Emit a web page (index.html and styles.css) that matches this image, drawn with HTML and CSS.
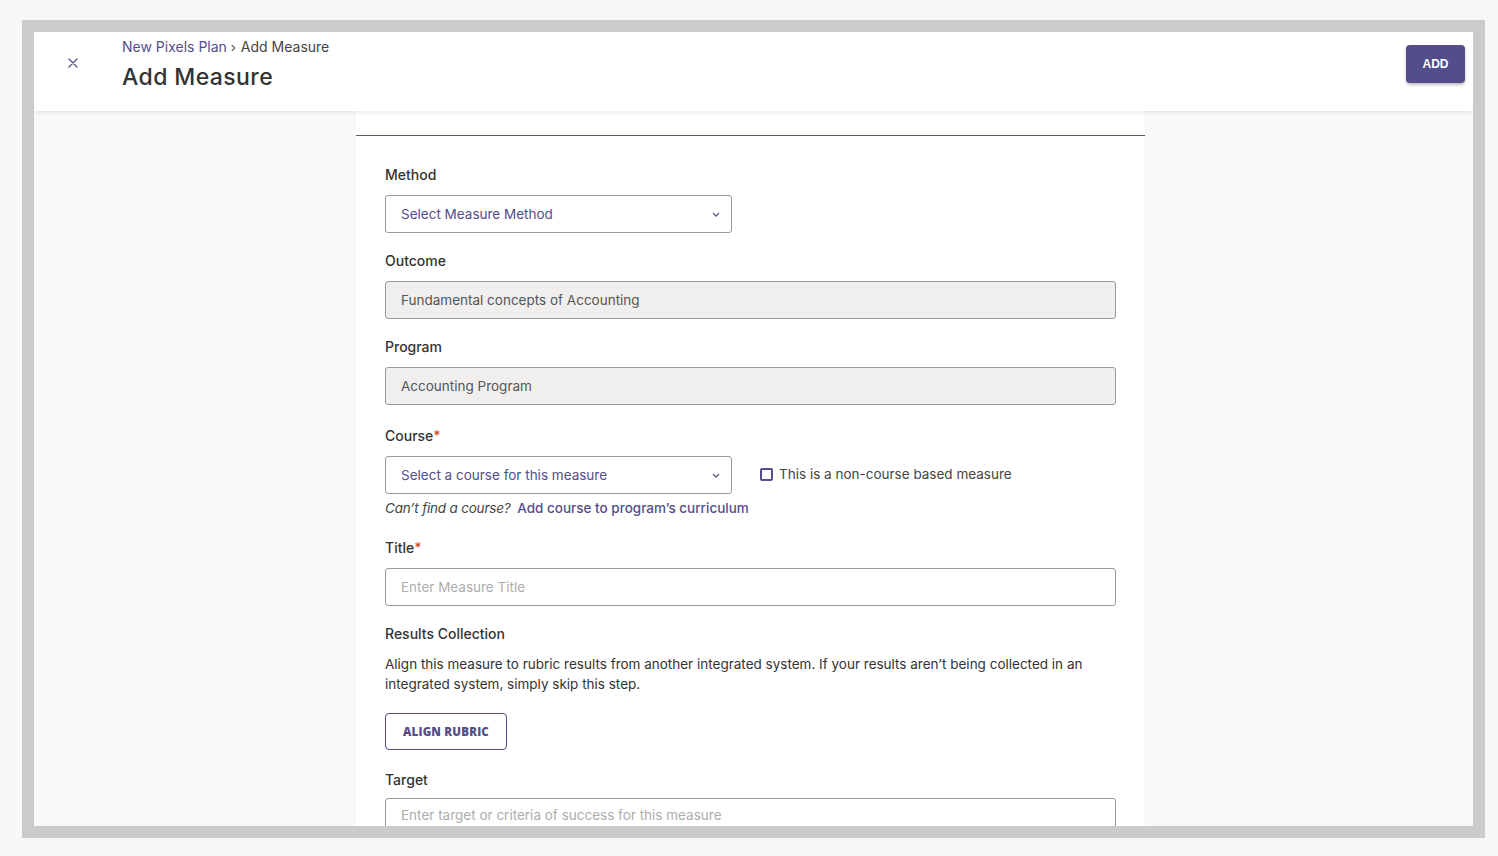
FILE: index.html
```html
<!DOCTYPE html>
<html lang="en">
<head>
<meta charset="utf-8">
<title>Add Measure</title>
<link rel="stylesheet" href="styles.css">
</head>
<body>
<div class="frame">
  <div class="window">
    <header class="topbar">
      <button class="close-btn" aria-label="Close">
        <svg width="10" height="10" viewBox="0 0 10 10"><path d="M1 1 L9 9 M9 1 L1 9" stroke="#5b5790" stroke-width="1.4" stroke-linecap="round"/></svg>
      </button>
      <div class="titles">
        <nav class="crumbs"><a class="crumb-link">New Pixels Plan</a><span class="crumb-sep">›</span><span class="crumb-current">Add Measure</span></nav>
        <h1 class="page-title">Add Measure</h1>
      </div>
      <button class="btn-primary">ADD</button>
    </header>

    <main class="content">
      <section class="card">
        <div class="card-top"></div>
        <form class="form">
          <div class="field">
            <label class="label">Method</label>
            <div class="select half">
              <span class="select-text">Select Measure Method</span>
              <svg class="chev" width="8" height="5" viewBox="0 0 8 5"><path d="M1 1 L4 4 L7 1" fill="none" stroke="#5b5790" stroke-width="1.3"/></svg>
            </div>
          </div>

          <div class="field">
            <label class="label">Outcome</label>
            <div class="input disabled">Fundamental concepts of Accounting</div>
          </div>

          <div class="field">
            <label class="label">Program</label>
            <div class="input disabled">Accounting Program</div>
          </div>

          <div class="field field-course">
            <label class="label">Course<span class="req">*</span></label>
            <div class="course-row">
              <div class="select half">
                <span class="select-text">Select a course for this measure</span>
                <svg class="chev" width="8" height="5" viewBox="0 0 8 5"><path d="M1 1 L4 4 L7 1" fill="none" stroke="#5b5790" stroke-width="1.3"/></svg>
              </div>
              <label class="check"><span class="box"></span>This is a non-course based measure</label>
            </div>
            <p class="help"><em>Can’t find a course?</em> <a class="help-link">Add course to program’s curriculum</a></p>
          </div>

          <div class="field">
            <label class="label">Title<span class="req">*</span></label>
            <div class="input placeholder">Enter Measure Title</div>
          </div>

          <div class="field field-results">
            <label class="label">Results Collection</label>
            <p class="desc">Align this measure to rubric results from another integrated system. If your results aren’t being collected in an integrated system, simply skip this step.</p>
            <button type="button" class="btn-outline">ALIGN RUBRIC</button>
          </div>

          <div class="field field-target">
            <label class="label">Target</label>
            <div class="input placeholder tall">Enter target or criteria of success for this measure</div>
          </div>
        </form>
      </section>
    </main>
  </div>
</div>
</body>
</html>
```

FILE: styles.css
```css
* { box-sizing: border-box; }

html, body {
  margin: 0;
  padding: 0;
  background: #f7f7f7;
  font-family: Inter, "Noto Sans", sans-serif;
  color: #333;
}

body {
  padding: 20px 13px 18px 22px;
}

.frame {
  width: 1463px;
  height: 818px;
  border: 12px solid #cbcbcb;
  background: #f9f9f8;
  overflow: hidden;
}

.window {
  height: 100%;
  display: flex;
  flex-direction: column;
}

/* top bar */
.topbar {
  position: relative;
  z-index: 2;
  flex: 0 0 79px;
  height: 79px;
  background: #fff;
  box-shadow: 0 2px 4px rgba(0, 0, 0, 0.08);
  display: flex;
  align-items: flex-start;
  padding: 0 8px 0 0;
}

.close-btn {
  width: 88px;
  height: 42px;
  border: 0;
  background: none;
  padding: 20px 10px 0 0;
  display: flex;
  justify-content: center;
  align-items: center;
}

.titles {
  flex: 1;
  padding-top: 6px;
}

.crumbs {
  font-size: 14px;
  line-height: 18px;
  color: #444;
}
.crumb-link { color: #524e8b; }
.crumb-sep { margin: 0 5px 0 4px; font-size: 13px; }
.crumb-current { color: #444; }

.page-title {
  margin: 7px 0 0 0;
  font-size: 23px;
  line-height: 28px;
  font-weight: 500;
  color: #333;
  letter-spacing: 0.4px;
}

.btn-primary {
  margin-top: 13px;
  width: 59px;
  height: 38px;
  border: 0;
  border-radius: 4px;
  background: #524e8b;
  color: #fff;
  font-family: "Liberation Sans", Arial, sans-serif;
  font-weight: 700;
  font-size: 12px;
  box-shadow: 0 2px 3px rgba(0, 0, 0, 0.25);
}

/* content */
.content {
  flex: 1;
  display: flex;
  padding-left: 322px;
  overflow: hidden;
}

.card {
  width: 789px;
  background: #fff;
  box-shadow: 0 0 2px rgba(0, 0, 0, 0.05);
}

.card-top {
  height: 25px;
  border-bottom: 1px solid #5b5870;
}

.form {
  padding: 29px 29px 0 29px;
}

.field {
  margin-bottom: 18px;
}

.label {
  display: block;
  font-size: 14px;
  line-height: 20px;
  font-weight: 500;
  color: #333;
  margin-bottom: 10px;
}

.req { color: #d4512b; }

.select, .input {
  height: 38px;
  border: 1px solid #9b9b9b;
  border-radius: 3px;
  font-size: 13.5px;
  display: flex;
  align-items: center;
  padding: 0 15px;
}

.half { width: 347px; }

.select {
  justify-content: space-between;
  color: #524e8b;
  padding-right: 11px;
}

.input.disabled {
  background: #f0efee;
  color: #555;
}

.input.placeholder { color: #adadad; }

.input.tall {
  height: 60px;
  align-items: flex-start;
  padding-top: 8px;
}

.field-course {
  padding-top: 3px;
  margin-bottom: 20px;
}

.course-row {
  display: flex;
  align-items: center;
}

.check {
  display: flex;
  align-items: center;
  margin-left: 28px;
  font-size: 13.5px;
  color: #444;
  margin-top: -2px;
}

.box {
  width: 13px;
  height: 13px;
  border: 2px solid #524e8b;
  border-radius: 2px;
  margin-right: 6px;
}

.help {
  margin: 4px 0 0 0;
  font-size: 13.5px;
  line-height: 20px;
  color: #444;
}

.help em { letter-spacing: -0.2px; }

.help-link {
  color: #524e8b;
  font-weight: 500;
  margin-left: 3px;
}

.field-results { margin-bottom: 20px; }

.desc {
  margin: 6px 0 19px 0;
  font-size: 13.5px;
  line-height: 20px;
  color: #333;
}

.btn-outline {
  width: 122px;
  height: 37px;
  background: #fff;
  border: 1px solid #524e8b;
  border-radius: 4px;
  color: #524e8b;
  font-family: "Open Sans", "Noto Sans", sans-serif;
  font-weight: 800;
  font-size: 11.5px;
  letter-spacing: 0.2px;
  margin-bottom: 0;
}

.field-target .label { margin-bottom: 8px; }
```
